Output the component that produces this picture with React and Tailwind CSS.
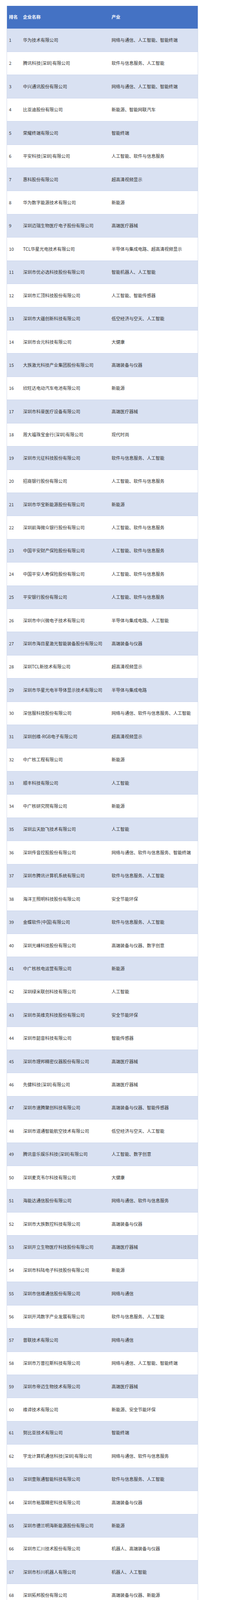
const rows = [
["华为技术有限公司","网络与通信、人工智能、智能终端"],
["腾讯科技(深圳)有限公司","软件与信息服务、人工智能"],
["中兴通讯股份有限公司","网络与通信、人工智能、智能终端"],
["比亚迪股份有限公司","新能源、智能网联汽车"],
["荣耀终端有限公司","智能终端"],
["平安科技(深圳)有限公司","人工智能、软件与信息服务"],
["惠科股份有限公司","超高清视频显示"],
["华为数字能源技术有限公司","新能源"],
["深圳迈瑞生物医疗电子股份有限公司","高端医疗器械"],
["TCL华星光电技术有限公司","半导体与集成电路、超高清视频显示"],
["深圳市优必选科技股份有限公司","智能机器人、人工智能"],
["深圳市汇顶科技股份有限公司","人工智能、智能传感器"],
["深圳市大疆创新科技有限公司","低空经济与空天、人工智能"],
["深圳市合元科技有限公司","大健康"],
["大族激光科技产业集团股份有限公司","高端装备与仪器"],
["欣旺达电动汽车电池有限公司","新能源"],
["深圳市科曼医疗设备有限公司","高端医疗器械"],
["周大福珠宝金行(深圳)有限公司","现代时尚"],
["深圳市元征科技股份有限公司","软件与信息服务、人工智能"],
["招商银行股份有限公司","人工智能、软件与信息服务"],
["深圳市华宝新能源股份有限公司","新能源"],
["深圳前海微众银行股份有限公司","人工智能、软件与信息服务"],
["中国平安财产保险股份有限公司","人工智能、软件与信息服务"],
["中国平安人寿保险股份有限公司","人工智能、软件与信息服务"],
["平安银行股份有限公司","人工智能、软件与信息服务"],
["深圳市中兴微电子技术有限公司","半导体与集成电路、人工智能"],
["深圳市海目星激光智能装备股份有限公司","高端装备与仪器"],
["深圳TCL新技术有限公司","超高清视频显示"],
["深圳市华星光电半导体显示技术有限公司","半导体与集成电路"],
["深信服科技股份有限公司","网络与通信、软件与信息服务、人工智能"],
["深圳创维-RGB电子有限公司","超高清视频显示"],
["中广核工程有限公司","新能源"],
["顺丰科技有限公司","人工智能"],
["中广核研究院有限公司","新能源"],
["深圳云天励飞技术有限公司","人工智能"],
["深圳传音控股股份有限公司","网络与通信、软件与信息服务、智能终端"],
["深圳市腾讯计算机系统有限公司","软件与信息服务、人工智能"],
["海洋王照明科技股份有限公司","安全节能环保"],
["金蝶软件(中国)有限公司","软件与信息服务、人工智能"],
["深圳光峰科技股份有限公司","高端装备与仪器、数字创意"],
["中广核核电运营有限公司","新能源"],
["深圳绿米联创科技有限公司","人工智能"],
["深圳市英维克科技股份有限公司","安全节能环保"],
["深圳市韶音科技有限公司","智能传感器"],
["深圳市理邦精密仪器股份有限公司","高端医疗器械"],
["先健科技(深圳)有限公司","高端医疗器械"],
["深圳市速腾聚创科技有限公司","高端装备与仪器、智能传感器"],
["深圳市道通智能航空技术有限公司","低空经济与空天、人工智能"],
["腾讯音乐娱乐科技(深圳)有限公司","人工智能、数字创意"],
["深圳麦克韦尔科技有限公司","大健康"],
["海能达通信股份有限公司","网络与通信、软件与信息服务"],
["深圳市大族数控科技有限公司","高端装备与仪器"],
["深圳开立生物医疗科技股份有限公司","高端医疗器械"],
["深圳市科陆电子科技股份有限公司","新能源"],
["深圳市信维通信股份有限公司","网络与通信"],
["深圳开鸿数字产业发展有限公司","软件与信息服务、人工智能"],
["普联技术有限公司","网络与通信"],
["深圳市万普拉斯科技有限公司","网络与通信、人工智能、智能终端"],
["深圳市帝迈生物技术有限公司","高端医疗器械"],
["维谛技术有限公司","新能源、安全节能环保"],
["努比亚技术有限公司","智能终端"],
["宇龙计算机通信科技(深圳)有限公司","网络与通信、软件与信息服务"],
["深圳壹账通智能科技有限公司","软件与信息服务、人工智能"],
["深圳市裕展精密科技有限公司","高端装备与仪器"],
["深圳市德兰明海新能源股份有限公司","新能源"],
["深圳市汇川技术股份有限公司","机器人、高端装备与仪器"],
["深圳市杉川机器人有限公司","机器人、人工智能"],
["深圳拓邦股份有限公司","高端装备与仪器、新能源"],
["深圳市豪鹏科技有限公司","新能源"],
["深圳须弥云图空间科技有限公司","人工智能"],
["深圳市冠旭电子股份有限公司","智能终端、数字创意"],
["深圳市酷开网络科技有限公司","软件与信息服务、人工智能"],
["深圳市光鉴科技有限公司","人工智能"],
["深圳海润新能源科技有限公司","新能源"],
["深圳市银星智能科技股份有限公司","机器人、人工智能"],
["深圳市洲明科技股份有限公司","安全节能环保"],
["深圳市锐明技术股份有限公司","智能终端、人工智能"],
["深圳市海柔创新科技有限公司","机器人、人工智能"],
["影石创新科技股份有限公司","智能终端"],
["深圳华大智造科技有限公司","生物医药、细胞与基因"],
["康键信息技术(深圳)有限公司","软件与信息服务、人工智能"],
["未来穿戴技术有限公司","大健康"],
["深圳依时货拉拉科技有限公司","软件与信息服务、人工智能"],
["芯海科技(深圳)股份有限公司","半导体与集成电路、人工智能"],
["深圳市锐尔觅移动通信有限公司","网络与通信、智能终端"],
["深圳新宙邦科技股份有限公司","新能源、高性能材料"],
["深圳市欧瑞博科技股份有限公司","人工智能"],
["贝特瑞新材料集团股份有限公司","新能源、高性能材料"],
["深圳市倍轻松科技股份有限公司","大健康"],
["深圳市拉普拉斯能源技术有限公司","新能源、高端装备与仪器"],
["深圳思谋信息科技有限公司","人工智能"],
["深圳市镭神智能系统有限公司","高端装备与仪器、智能传感器"],
["深圳市艾比森光电股份有限公司","安全节能环保"],
["深圳元戎启行科技有限公司","人工智能"],
["深圳市奥拓电子股份有限公司","安全节能环保"],
["深圳市纵维立方科技有限公司","高端装备与仪器"],
["深圳市德方纳米科技股份有限公司","新能源、高性能材料"],
["菲鹏生物股份有限公司","生物医药"],
["深圳信立泰药业股份有限公司","生物医药"],
["深圳市绘王动漫科技有限公司","数字创意"],
];

export default function App() {
  return (
    <div
      className="w-[600px] h-[6068px] bg-white pt-[15px]"
      style={{ fontFamily: '"Noto Sans CJK SC", "Noto Sans", sans-serif' }}
    >
      <div className="ml-[17px] w-[491px] border-x border-[#d3dbec]">
        <div className="grid grid-cols-[36px_227px_1fr] items-center h-[58.5px] bg-[#4472c4] text-white font-bold text-[11.3px] leading-none border-b border-[#b9c8e8]">
          <div className="pl-[5px]">排名</div>
          <div className="pl-[5px]">企业名称</div>
          <div className="pl-[5px]">产业</div>
        </div>
        {rows.map((r, i) => (
          <div
            key={i}
            className={
              "grid grid-cols-[36px_227px_1fr] items-center h-[59.43px] text-[11.3px] leading-none text-[#333333] border-b border-[#c8d3ec] " +
              (i % 2 === 0 ? "bg-[#d9e1f2]" : "bg-white")
            }
          >
            <div className="pl-[5px] whitespace-nowrap">{i + 1}</div>
            <div className="pl-[5px] whitespace-nowrap">{r[0]}</div>
            <div className="pl-[5px] whitespace-nowrap">{r[1]}</div>
          </div>
        ))}
      </div>
      <div className="ml-[23px] mt-[21px] text-[10.3px] leading-[16px] text-[#9a9a9a]">
        (图表由深圳知识产权保护中心提供)
      </div>
    </div>
  );
}
